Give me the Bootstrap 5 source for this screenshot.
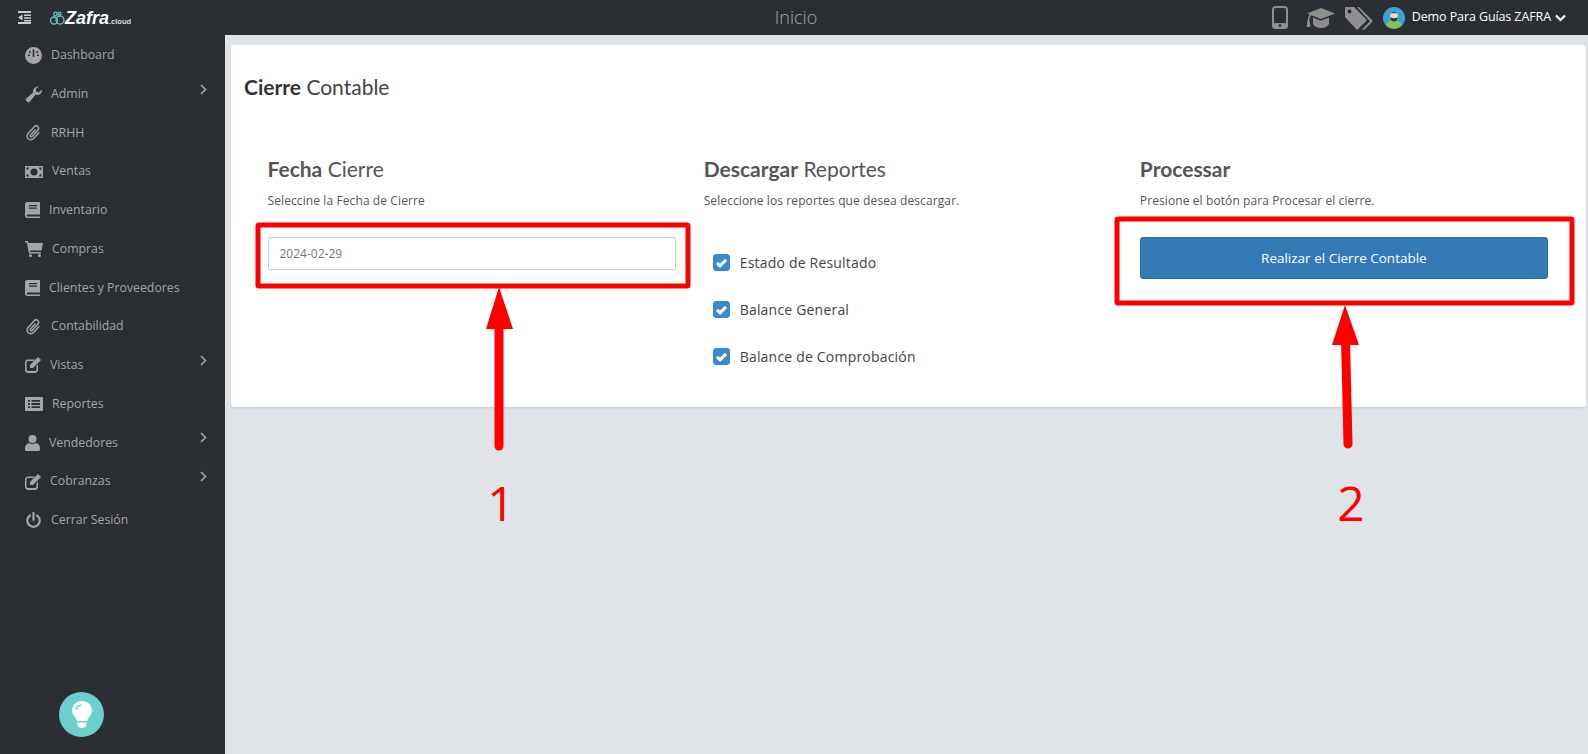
<!DOCTYPE html>
<html lang="es">
<head>
    <meta charset="UTF-8">
    <meta name="viewport" content="width=device-width, initial-scale=1.0">
    <title>Cierre Contable</title>
    <link href="https://cdn.jsdelivr.net/npm/bootstrap@5.3.0/dist/css/bootstrap.min.css" rel="stylesheet">
    <style>
        html, body { height: 100%; }
        body { background: #dfe4e8; font-family: "Open Sans", sans-serif; overflow: hidden; position: relative; }
        .top-bar { height: 35px; background: #2b2e33; }
        .top-left { width: 225px; padding-left: 18px; }
        .logo-icon { margin-left: 19px; }
        .logo-text { font-family: "Liberation Sans", sans-serif; font-weight: 700; font-style: italic; font-size: 18px; color: #fff; line-height: 1; }
        .logo-text span { font-size: 7.5px; font-style: normal; color: #ddd; }
        .top-title { font-size: 18px; color: #a8a8a8; font-weight: 300; left: 796px; transform: translateX(-50%); top: 4px; }
        .top-right { padding-right: 22px; }
        .cap-ico { margin-left: 18px; }
        .tag-ico { margin-left: 9px; }
        .face-ico { margin-left: 10px; }
        .user-name { font-size: 12.5px; color: #fff; letter-spacing: -.1px; margin-left: 7px; }
        .side-bar { width: 225px; background: #2b2e33; height: 719px; padding-top: 1px; }
        .side-link { height: 38.75px; flex: none; padding-left: 25px; color: #a5a5a5; font-size: 12.3px; text-decoration: none; }
        .side-link svg.ico { margin-right: 9px; fill: #a5a5a5; flex: none; }
        .side-link svg.ico-line { margin-left: 1px; margin-right: 10px; flex: none; fill: none; stroke: #a5a5a5; }
        .side-chev { margin-left: auto; margin-right: 18px; margin-bottom: 10px; }
        .help-bulb { width: 45px; height: 45px; border-radius: 50%; background: #6bd0cd; left: 59px; top: 692px; }
        .main-area { padding: 10px 2px 0 6px; }
        .close-card { height: 362px; border: 0; border-radius: 3px; box-shadow: 0 1px 2px rgba(0,0,0,.12); padding: 0 38px 0 36.5px; }
        .close-title { font-family: Lato, sans-serif; font-size: 21px; font-weight: 400; color: #444; margin: 29px 0 0 -23.5px; line-height: 26px; }
        .close-title b, .sec-title b { font-weight: 700; }
        .close-title b { color: #333; }
        .cols { margin-top: 57px; --bs-gutter-x: 28px; }
        .sec-title { font-family: Lato, sans-serif; font-size: 21px; font-weight: 400; color: #555; line-height: 24px; margin: 0 0 12px; }
        .sec-note { font-size: 12px; letter-spacing: .1px; color: #555; line-height: 16px; margin: 0 0 28px; }
        .date-input { height: 33px; font-size: 12px; color: #777; padding: 0 11px; border-color: #ccc; border-radius: 2px; }
        .check-list { padding: 2px 0 0 9px; }
        .check-row { height: 47px; margin: 0; padding: 0; gap: 10px; color: #444; font-size: 14px; letter-spacing: .2px; }
        .check-row .form-check-input { float: none; width: 17px; height: 17px; margin: 0; border-radius: 3px; }
        .check-row .form-check-input:checked { background-color: #3a8ad0; border-color: #3a8ad0; }
        .check-row .form-check-input:checked[type=checkbox] { --bs-form-check-bg-image: url("data:image/svg+xml,%3csvg xmlns='http://www.w3.org/2000/svg' viewBox='0 0 20 20'%3e%3cpath fill='none' stroke='%23fff' stroke-width='4' d='M4 10.500l4 4 8-8'/%3e%3c/svg%3e"); }
        .go-btn { height: 42px; font-size: 13.5px; font-weight: 500; background: #337ab7; border-color: #2e6da4; border-radius: 3px; }
        .marks { left: 0; top: 0; pointer-events: none; }
        .marks text { font-family: "Open Sans", sans-serif; font-size: 48px; fill: #f00; }
    </style>
</head>
<body>

<div class="top-bar d-flex align-items-center position-relative">
    <div class="top-left d-flex align-items-center">
        <svg width="13" height="13" viewBox="0 0 13 13" fill="#ccc"><path d="M0 0h13v2H0zM6 3.5h7v1.600H6zM6 6.200h7v1.600H6zM6 8.900h7v1.600H6zM0 11h13v2H0zM4.500 3.500v6L0 6.500z"/></svg>
        <svg class="logo-icon" width="15" height="14" viewBox="0 0 15 14" fill="none" stroke="#6bc4c0" stroke-width="1.300"><circle cx="4" cy="9.500" r="3.500"/><circle cx="10" cy="9" r="4"/><circle cx="5.500" cy="3" r="1.800"/><circle cx="9.500" cy="2.500" r="1.400"/></svg>
        <div class="logo-text">Zafra<span>.cloud</span></div>
    </div>
    <div class="top-title position-absolute">Inicio</div>
    <div class="top-right ms-auto d-flex align-items-center">
        <svg width="16" height="23" viewBox="0 0 16 23"><rect x="1" y="1" width="14" height="21" rx="2.500" fill="none" stroke="#8f8f8f" stroke-width="2"/><rect x="1" y="17" width="14" height="5" rx="2" fill="#8f8f8f"/><circle cx="8" cy="19.500" r="1.300" fill="#2b2e33"/></svg>
        <svg class="cap-ico" width="29" height="22" viewBox="0 0 29 22" fill="#8f8f8f"><path d="M15 1 29 6.500 15 12 5.500 8.300C4 9.500 3.500 11 3.400 12.500L4.500 20H.5L1.800 12.500C2 10.500 2.500 8.800 3.800 7.500L1 6.500z"/><path d="M7 10.500 15 13.700 23 10.500V17C21 20 18 21 15 21S9 20 7 17z"/></svg>
        <svg class="tag-ico" width="29" height="24" viewBox="0 0 29 24" fill="#8f8f8f"><path d="M1 1h9L22 13c.7.700.7 1.500 0 2.200L14.200 23c-.7.700-1.500.700-2.200 0L1 11zM5.500 3.500a2 2 0 1 0 .01 0z" fill-rule="evenodd"/><path d="M13 1h2L28 14c.6.600.6 1.400 0 2L20.500 23.500h-2.700L26 15.200z"/></svg>
        <svg class="face-ico" width="22" height="22" viewBox="0 0 22 22"><circle cx="11" cy="11" r="11" fill="#3aa2d8"/><path d="M3 18c1-3 4-4.500 8-4.500s7 1.500 8 4.500a11 11 0 0 1-16 0z" fill="#8cc152"/><circle cx="11" cy="9" r="4" fill="#f3d6b5"/><path d="M7.500 10c0 3 1.500 4.500 3.500 4.500s3.500-1.500 3.500-4.500c-1 1-2 1.200-3.500 1.200S8.500 11 7.500 10zM8 6.500c1-2 5-2 6 0-2-.7-4-.7-6 0z" fill="#333"/></svg>
        <span class="user-name">Demo Para Guías ZAFRA</span>
        <svg class="ms-1" width="11" height="8" viewBox="0 0 11 8" fill="none" stroke="#fff" stroke-width="2.200"><path d="M1 1.500 5.500 6 10 1.500"/></svg>
    </div>
</div>

<div class="d-flex">
    <nav class="side-bar d-flex flex-column flex-shrink-0">
        <a class="side-link d-flex align-items-center" href="#">
            <svg class="ico" width="17" height="17" viewBox="0 0 17 17"><path fill-rule="evenodd" d="M8.500 0a8.500 8.500 0 1 1 0 17 8.500 8.500 0 0 1 0-17zM7.700 2.500v7.500h1.600V2.500zM3 7.500v1.600h2V7.500zM12 7.500v1.600h2V7.500zM4.800 3.800 3.700 4.900l1.300 1.300 1.100-1.100zM12.200 3.800l-1.300 1.300L12 6.200l1.300-1.300z"/></svg>
            Dashboard
        </a>
        <a class="side-link d-flex align-items-center" href="#">
            <svg class="ico" width="17" height="17" viewBox="0 0 17 17"><path d="M16.700 3.500C17.500 6.300 15.300 9 12.500 9c-.7 0-1.300-.1-1.800-.4L4.500 16c-1.300 1.500-5-1.800-3.400-3.300L8 6.500C7.300 3.500 10.500.2 13.700.5L10.800 3.300l.6 2.500 2.500.6z"/></svg>
            Admin
            <svg class="side-chev" width="7" height="11" viewBox="0 0 7 11" fill="none" stroke="#a5a5a5" stroke-width="1.600"><path d="M1 1l4.500 4.500L1 10"/></svg>
        </a>
        <a class="side-link d-flex align-items-center" href="#">
            <svg class="ico-line" width="15" height="16" viewBox="0 0 15 16" stroke-width="1.500"><g transform="rotate(42 7.500 8)"><path d="M11.200 3.500v8.500a3.700 3.700 0 0 1-7.400 0V2.800a2.500 2.500 0 0 1 5 0v8.700a1.100 1.100 0 0 1-2.200 0V4"/></g></svg>
            RRHH
        </a>
        <a class="side-link d-flex align-items-center" href="#">
            <svg class="ico" width="18" height="12" viewBox="0 0 18 12"><path fill-rule="evenodd" d="M0 0h18v12H0zM9 2.500a3.500 3.500 0 1 0 0 7 3.500 3.500 0 0 0 0-7zM1.500 1.500V4c1.300 0 2.500-1 2.500-2.500zM14 1.500c0 1.500 1.200 2.500 2.500 2.500V1.500zM1.500 8v2.500H4C4 9 2.800 8 1.500 8zM16.500 8c-1.300 0-2.500 1-2.500 2.500h2.500z"/></svg>
            Ventas
        </a>
        <a class="side-link d-flex align-items-center" href="#">
            <svg class="ico" width="15" height="16" viewBox="0 0 15 16"><path fill-rule="evenodd" d="M2 0h12.500c.3 0 .5.200.5.500V12c0 .3-.2.500-.5.500h-12C2 12.500 1.800 13 1.800 13.500S2 14.500 2.500 14.500H15V16H2C1 16 0 15 0 13.500V2C0 1 1 0 2 0zM4 3v1.200h8V3zM4 5.500v1.200h8V5.500z"/></svg>
            Inventario
        </a>
        <a class="side-link d-flex align-items-center" href="#">
            <svg class="ico" width="18" height="16" viewBox="0 0 18 16"><path d="M0 0h3l.5 2H18l-1.500 7.500H5l.4 1.500H16v1.400H4L1.800 1.500H0z"/><circle cx="5.500" cy="14.500" r="1.500"/><circle cx="14.500" cy="14.500" r="1.500"/></svg>
            Compras
        </a>
        <a class="side-link d-flex align-items-center" href="#">
            <svg class="ico" width="15" height="16" viewBox="0 0 15 16"><path fill-rule="evenodd" d="M2 0h12.500c.3 0 .5.200.5.500V12c0 .3-.2.500-.5.500h-12C2 12.500 1.800 13 1.800 13.500S2 14.500 2.500 14.500H15V16H2C1 16 0 15 0 13.500V2C0 1 1 0 2 0zM4 3v1.200h8V3zM4 5.500v1.200h8V5.500z"/></svg>
            Clientes y Proveedores
        </a>
        <a class="side-link d-flex align-items-center" href="#">
            <svg class="ico-line" width="15" height="16" viewBox="0 0 15 16" stroke-width="1.500"><g transform="rotate(42 7.500 8)"><path d="M11.200 3.500v8.500a3.700 3.700 0 0 1-7.400 0V2.800a2.500 2.500 0 0 1 5 0v8.700a1.100 1.100 0 0 1-2.200 0V4"/></g></svg>
            Contabilidad
        </a>
        <a class="side-link d-flex align-items-center" href="#">
            <svg class="ico" width="16" height="16" viewBox="0 0 16 16"><path d="M3 2.500h7L8.500 4H3c-.8 0-1.500.7-1.500 1.500v7c0 .8.700 1.500 1.500 1.500h7c.8 0 1.500-.7 1.500-1.500V9L13 7.500v5.500c0 1.600-1.400 3-3 3H3c-1.600 0-3-1.400-3-3V5.500C0 3.900 1.400 2.500 3 2.500z"/><path d="M13 0l3 3-8 8H5V8z"/></svg>
            Vistas
            <svg class="side-chev" width="7" height="11" viewBox="0 0 7 11" fill="none" stroke="#a5a5a5" stroke-width="1.600"><path d="M1 1l4.500 4.500L1 10"/></svg>
        </a>
        <a class="side-link d-flex align-items-center" href="#">
            <svg class="ico" width="18" height="14" viewBox="0 0 18 14"><path fill-rule="evenodd" d="M1 0h16c.6 0 1 .4 1 1v12c0 .6-.4 1-1 1H1c-.6 0-1-.4-1-1V1c0-.6.400-1 1-1zM3 3v1.800h2V3zM6.500 3v1.800H15V3zM3 6.100v1.800h2V6.100zM6.500 6.100v1.800H15V6.100zM3 9.200V11h2V9.200zM6.500 9.200V11H15V9.200z"/></svg>
            Reportes
        </a>
        <a class="side-link d-flex align-items-center" href="#">
            <svg class="ico" width="15" height="16" viewBox="0 0 15 16"><circle cx="7.500" cy="4" r="4"/><path d="M4 8c2 1.200 5 1.200 7 0 2.500.500 4 2.500 4 5v1.500c0 .8-.7 1.500-1.500 1.500h-12C.7 16 0 15.300 0 14.500V13c0-2.500 1.500-4.500 4-5z"/></svg>
            Vendedores
            <svg class="side-chev" width="7" height="11" viewBox="0 0 7 11" fill="none" stroke="#a5a5a5" stroke-width="1.600"><path d="M1 1l4.500 4.500L1 10"/></svg>
        </a>
        <a class="side-link d-flex align-items-center" href="#">
            <svg class="ico" width="16" height="16" viewBox="0 0 16 16"><path d="M3 2.500h7L8.500 4H3c-.8 0-1.500.7-1.500 1.500v7c0 .8.700 1.500 1.500 1.500h7c.8 0 1.500-.7 1.500-1.500V9L13 7.500v5.500c0 1.600-1.400 3-3 3H3c-1.600 0-3-1.400-3-3V5.500C0 3.900 1.400 2.500 3 2.500z"/><path d="M13 0l3 3-8 8H5V8z"/></svg>
            Cobranzas
            <svg class="side-chev" width="7" height="11" viewBox="0 0 7 11" fill="none" stroke="#a5a5a5" stroke-width="1.600"><path d="M1 1l4.500 4.500L1 10"/></svg>
        </a>
        <a class="side-link d-flex align-items-center" href="#">
            <svg class="ico-line" width="15" height="16" viewBox="0 0 15 16" stroke-width="2.200" stroke-linecap="round"><path d="M7.500 1v7"/><path d="M4 3.500a6.200 6.200 0 1 0 7 0"/></svg>
            Cerrar Sesión
        </a>
    </nav>

    <main class="main-area flex-grow-1">
        <div class="card close-card">
            <h2 class="close-title"><b>Cierre</b> Contable</h2>
            <div class="row cols">
                <div class="col-4">
                    <h3 class="sec-title"><b>Fecha</b> Cierre</h3>
                    <p class="sec-note">Seleccine la Fecha de Cierre</p>
                    <input type="text" class="form-control date-input" value="2024-02-29">
                </div>
                <div class="col-4">
                    <h3 class="sec-title"><b>Descargar</b> Reportes</h3>
                    <p class="sec-note">Seleccione los reportes que desea descargar.</p>
                    <div class="check-list">
                        <label class="check-row d-flex align-items-center"><input class="form-check-input" type="checkbox" checked> Estado de Resultado</label>
                        <label class="check-row d-flex align-items-center"><input class="form-check-input" type="checkbox" checked> Balance General</label>
                        <label class="check-row d-flex align-items-center"><input class="form-check-input" type="checkbox" checked> Balance de Comprobación</label>
                    </div>
                </div>
                <div class="col-4">
                    <h3 class="sec-title"><b>Processar</b></h3>
                    <p class="sec-note">Presione el botón para Procesar el cierre.</p>
                    <button type="button" class="btn btn-primary w-100 go-btn">Realizar el Cierre Contable</button>
                </div>
            </div>
        </div>
    </main>
</div>

<div class="help-bulb position-absolute d-flex align-items-center justify-content-center">
    <svg width="20" height="27" viewBox="0 0 20 27"><path d="M10 0c5.500 0 10 4 10 9.500 0 3.500-2 5.500-3.300 7.500-.7 1-1 2-1.200 3H5c-.2-1-.5-2-1.200-3C2.500 15 0 13 0 9.500 0 4 4.500 0 10 0z" fill="#fff"/><path d="M4.500 9C4.500 6 7 4 9.500 4" fill="none" stroke="#6bd0cd" stroke-width="1.500"/><path d="M5.500 21.500h9V24c0 1.500-2 3-4.500 3s-4.500-1.500-4.500-3z" fill="#fff"/></svg>
</div>

<svg class="marks position-absolute" width="1588" height="754" viewBox="0 0 1588 754">
    <rect x="258" y="225" width="430" height="61" fill="none" stroke="#f00" stroke-width="5" rx="1"/>
    <rect x="1117" y="219" width="455" height="84" fill="none" stroke="#f00" stroke-width="5" rx="1"/>
    <path d="M499 287 513 329H486z" fill="#f00"/>
    <path d="M499 325V446" stroke="#f00" stroke-width="9" stroke-linecap="round"/>
    <path d="M1345 305 1359 345H1332z" fill="#f00"/>
    <path d="M1345.500 340 1348 444" stroke="#f00" stroke-width="9" stroke-linecap="round"/>
    <text x="501" y="521" text-anchor="middle">1</text>
    <text x="1351" y="521" text-anchor="middle">2</text>
</svg>

</body>
</html>
